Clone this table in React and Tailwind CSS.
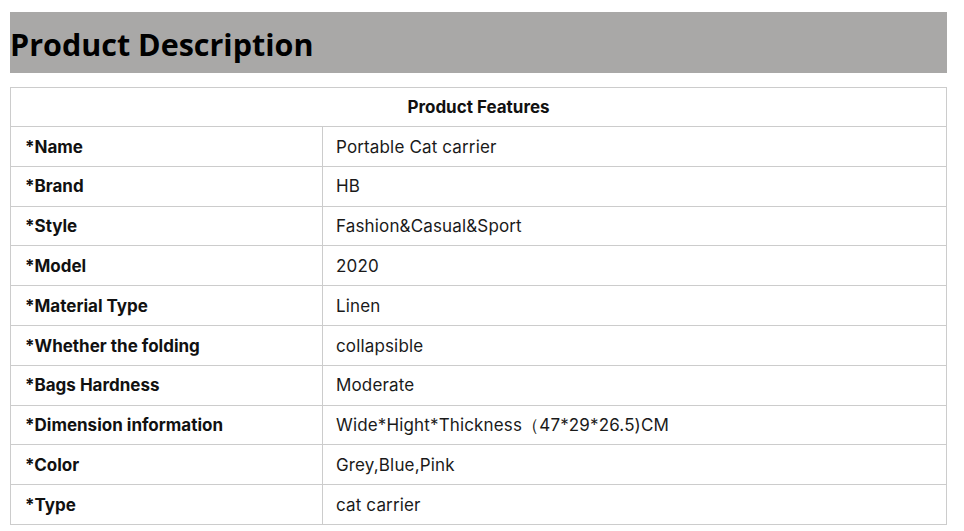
const rows = [
  ["*Name", "Portable Cat carrier"],
  ["*Brand", "HB"],
  ["*Style", "Fashion&Casual&Sport"],
  ["*Model", "2020"],
  ["*Material Type", "Linen"],
  ["*Whether the folding", "collapsible"],
  ["*Bags Hardness", "Moderate"],
  ["*Dimension information", "Wide*Hight*Thickness（47*29*26.5)CM"],
  ["*Color", "Grey,Blue,Pink"],
  ["*Type", "cat carrier"],
];

export default function App() {
  return (
    <div className="w-[964px] h-[531px] bg-white pt-3 px-[10px] pr-[17px] overflow-hidden">
      <div className="h-[61px] bg-[#a9a8a7] flex items-center pt-[4px]">
        <h1 className="font-['Open_Sans',sans-serif] font-bold text-[30.5px] text-black leading-none">
          Product Description
        </h1>
      </div>

      <table className="mt-[14px] w-full border-collapse font-['Inter',sans-serif] text-[17px] text-[#1a1a1a]">
        <thead>
          <tr className="h-[39px]">
            <th colSpan={2} className="border border-[#cccccc] pt-[2px] font-bold text-[#111]">
              Product Features
            </th>
          </tr>
        </thead>
        <tbody>
          {rows.map(([k, v]) => (
            <tr key={k} className="h-[39.8px]">
              <td className="w-[312px] border border-[#cccccc] px-[14px] pt-[2px] font-bold text-[#111]">{k}</td>
              <td className="border border-[#cccccc] px-[13px] pt-[2px] font-normal tracking-[0.15px]">{v}</td>
            </tr>
          ))}
        </tbody>
      </table>
    </div>
  );
}
